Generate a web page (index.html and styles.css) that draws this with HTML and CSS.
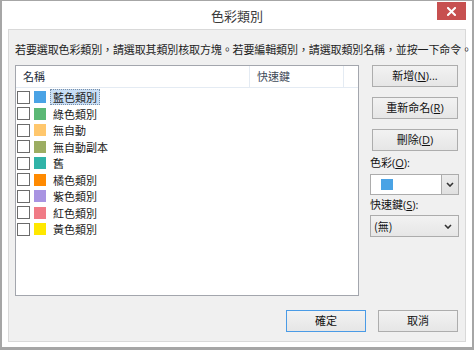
FILE: index.html
```
<!DOCTYPE html>
<html lang="zh-Hant">
<head>
<meta charset="utf-8">
<title>色彩類別</title>
<link rel="stylesheet" href="styles.css">
</head>
<body>
<div class="window">
  <div class="titlebar">
    <span class="title">色彩類別</span>
    <div class="close">
      <svg width="9" height="9" viewBox="0 0 9 9"><path d="M1 1 L8 8 M8 1 L1 8" stroke="#fff" stroke-width="2" stroke-linecap="square"/></svg>
    </div>
  </div>
  <div class="panel">
    <p class="intro">若要選取色彩類別，請選取其類別核取方塊。若要編輯類別，請選取類別名稱，並按一下命令。</p>
    <div class="main">
      <div class="list">
        <div class="list-head">
          <div class="col col-name">名稱</div>
          <div class="col col-key">快速鍵</div>
          <div class="col col-rest"></div>
        </div>
        <div class="rows">
          <div class="row"><span class="check"></span><span class="swatch c-blue"></span><span class="name selected">藍色類別</span></div>
          <div class="row"><span class="check"></span><span class="swatch c-green"></span><span class="name">綠色類別</span></div>
          <div class="row"><span class="check"></span><span class="swatch c-peach"></span><span class="name">無自動</span></div>
          <div class="row"><span class="check"></span><span class="swatch c-olive"></span><span class="name">無自動副本</span></div>
          <div class="row"><span class="check"></span><span class="swatch c-teal"></span><span class="name">舊</span></div>
          <div class="row"><span class="check"></span><span class="swatch c-orange"></span><span class="name">橘色類別</span></div>
          <div class="row"><span class="check"></span><span class="swatch c-purple"></span><span class="name">紫色類別</span></div>
          <div class="row"><span class="check"></span><span class="swatch c-red"></span><span class="name">紅色類別</span></div>
          <div class="row"><span class="check"></span><span class="swatch c-yellow"></span><span class="name">黃色類別</span></div>
        </div>
      </div>
      <div class="side">
        <button class="btn side-btn">新增(<u>N</u>)...</button>
        <button class="btn side-btn">重新命名(<u>R</u>)</button>
        <button class="btn side-btn">刪除(<u>D</u>)</button>
        <div class="label label-color">色彩(<u>O</u>):</div>
        <div class="combo-color">
          <div class="combo-value"><span class="combo-swatch c-blue"></span></div>
          <div class="combo-arrow">
            <svg width="8" height="5" viewBox="0 0 8 5"><polyline points="1,1 4,4 7,1" fill="none" stroke="#333" stroke-width="1.6"/></svg>
          </div>
        </div>
        <div class="label label-key">快速鍵(<u>S</u>):</div>
        <div class="combo-key">
          <span class="combo-text">(無)</span>
          <svg width="8" height="5" viewBox="0 0 8 5"><polyline points="1,1 4,4 7,1" fill="none" stroke="#333" stroke-width="1.6"/></svg>
        </div>
      </div>
    </div>
    <div class="footer">
      <button class="btn foot-btn default">確定</button>
      <button class="btn foot-btn">取消</button>
    </div>
  </div>
</div>
</body>
</html>
```
FILE: styles.css
```
* { box-sizing: border-box; }
html, body { margin: 0; padding: 0; }
body {
  width: 474px;
  height: 350px;
  font-family: "Noto Sans CJK TC", sans-serif;
  font-size: 11px;
  color: #1a1a1a;
  background: #fff;
}
.window {
  width: 474px;
  height: 350px;
  border-style: solid;
  border-color: #a6a6a6;
  border-width: 1px 2px 3px 2px;
  background: #fff;
  display: flex;
  flex-direction: column;
}
.titlebar {
  height: 28px;
  display: grid;
  grid-template-columns: 1fr auto 1fr;
  align-items: center;
}
.title {
  grid-column: 2;
  font-size: 13px;
  line-height: 16px;
  color: #3a3a3a;
  margin-top: 1px;
}
.close {
  grid-column: 3;
  justify-self: end;
  align-self: start;
  margin-top: 1px;
  margin-right: 6px;
  width: 29px;
  height: 18px;
  background: #c75050;
  display: flex;
  align-items: center;
  justify-content: center;
}
.panel {
  flex: 1;
  margin: 0 6px 5px 6px;
  border: 1px solid #d9d9d9;
  background: #f0f0f0;
  padding: 11px 6px 0 6px;
  display: flex;
  flex-direction: column;
}
.intro {
  margin: 0;
  height: 16px;
  line-height: 16px;
  font-size: 11px;
  letter-spacing: -0.12px;
  color: #1e1e1e;
  white-space: nowrap;
}
.main {
  margin-top: 8px;
  display: flex;
  gap: 11px;
}
.list {
  width: 344px;
  height: 231px;
  border: 1px solid #a3a6ad;
  background: #fff;
}
.list-head {
  height: 22px;
  display: flex;
  border-bottom: 1px solid #e4ebf3;
}
.col {
  line-height: 21px;
  color: #202a38;
  padding-left: 7px;
}
.col-name { width: 234px; border-right: 1px solid #e4ebf3; }
.col-key { width: 94px; border-right: 1px solid #e4ebf3; color: #404a58; }
.col-rest { flex: 1; }
.rows { padding-top: 1px; }
.row {
  height: 16.5px;
  display: flex;
  align-items: center;
  padding-left: 1px;
}
.check {
  width: 13px;
  height: 13px;
  border: 1px solid #6b6b6b;
  background: #fff;
  flex: none;
}
.swatch {
  width: 12px;
  height: 12px;
  margin-left: 4px;
  flex: none;
}
.name {
  margin-left: 4px;
  height: 16px;
  line-height: 14px;
  padding: 0 2px;
  border: 1px dotted transparent;
  color: #1a1a1a;
  white-space: nowrap;
}
.name.selected {
  background: #c9def5;
  border-color: #7a90a8;
}
.c-blue { background: #4aa3e5; }
.c-green { background: #5bb875; }
.c-peach { background: #ffc76d; }
.c-olive { background: #9cad62; }
.c-teal { background: #30b3a8; }
.c-orange { background: #ff8a00; }
.c-purple { background: #a994e2; }
.c-red { background: #f07b86; }
.c-yellow { background: #ffe800; }

.side {
  width: 89px;
  display: flex;
  flex-direction: column;
}
.btn {
  font-family: "Open Sans", "Noto Sans CJK TC", sans-serif;
  font-size: 11px;
  line-height: 14px;
  color: #111;
  border: 1px solid #adadad;
  background: linear-gradient(#f2f2f2, #e6e6e6);
  padding: 0;
  margin: 0;
  height: 22px;
}
.btn u { text-underline-offset: 1px; }
.side-btn {
  width: 86px;
  margin-left: 2px;
}
.side-btn + .side-btn { margin-top: 10px; }
.label {
  height: 16px;
  line-height: 16px;
  font-family: "Open Sans", "Noto Sans CJK TC", sans-serif;
  color: #111;
}
.label-color { margin-top: 4px; }
.label-key { margin-top: 2px; }
.combo-color {
  margin-top: 3px;
  height: 21px;
  border: 1px solid #acacac;
  background: #fff;
  display: flex;
}
.combo-value {
  flex: 1;
  display: flex;
  align-items: center;
  padding-left: 10px;
}
.combo-swatch {
  width: 12px;
  height: 11px;
}
.combo-arrow {
  width: 17px;
  border-left: 1px solid #acacac;
  background: linear-gradient(#ececec, #e0e0e0);
  display: flex;
  align-items: center;
  justify-content: center;
}
.combo-key {
  margin-top: 2px;
  height: 22px;
  border: 1px solid #acacac;
  background: linear-gradient(#f2f2f2, #e6e6e6);
  display: flex;
  align-items: center;
  justify-content: space-between;
  padding: 0 6px 0 3px;
}
.combo-text { line-height: 14px; color: #111; }
.footer {
  margin-top: 14px;
  display: flex;
  justify-content: flex-end;
  gap: 12px;
  padding-right: 1px;
}
.foot-btn { width: 80px; }
.foot-btn.default { border-color: #4a9be6; }
```
